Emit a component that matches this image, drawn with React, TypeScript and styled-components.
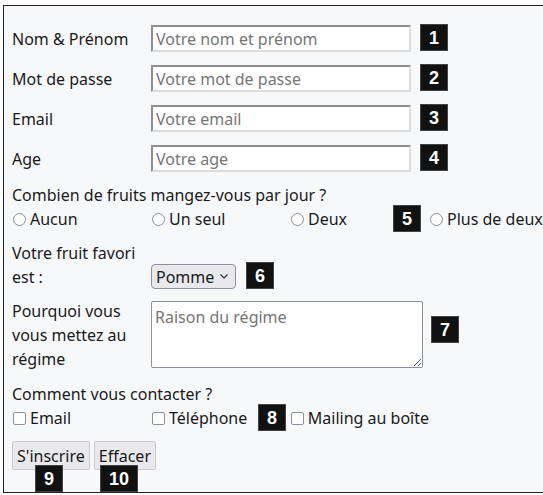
import React from "react";
import styled, { createGlobalStyle } from "styled-components";

const Global = createGlobalStyle`
  html, body { margin: 0; padding: 0; background: #ffffff; }
  body { font-family: "Noto Sans", "DejaVu Sans", sans-serif; font-size: 16px; color: #1a1a1a; overflow: hidden; }
`;

const Form = styled.form`
  position: relative;
  box-sizing: border-box;
  margin: 5px 0 0 3px;
  width: calc(100vw - 3px);
  height: 488px;
  border: 1px solid #222;
  border-right: 0;
  background: #f7f8fa;
  padding: 19px 0 0 8px;
  line-height: 24px;
`;

const Row = styled.div<{ $mt?: number; $align?: string }>`
  display: flex;
  align-items: ${(p) => p.$align || "center"};
  margin-top: ${(p) => p.$mt ?? 0}px;
`;

const Label = styled.label`
  width: 139px;
  flex: none;
`;

const TextInput = styled.input`
  box-sizing: border-box;
  width: 260px;
  height: 27px;
  margin: 0;
  padding: 1px 3px;
  font: inherit;
  background: #fff;
  border-width: 2px;
  border-style: solid;
  border-color: #8f8f8f #dcdcdc #dcdcdc #8f8f8f;
  &::placeholder { color: #767676; }
`;

const Badge = styled.span<{ $ml?: number; $mt?: number }>`
  display: inline-flex;
  align-items: center;
  justify-content: center;
  box-sizing: border-box;
  min-width: 28px;
  height: 27px;
  padding: 0 8px;
  margin-left: ${(p) => p.$ml ?? 0}px;
  margin-top: ${(p) => p.$mt ?? 0}px;
  background: #111;
  color: #fff;
  font-family: "Liberation Sans", Arial, sans-serif;
  font-weight: bold;
  font-size: 18px;
  line-height: 1;
  border: 1px solid #444;
  flex: none;
`;

const FloatBadge = styled(Badge)<{ $x: number; $y: number }>`
  position: absolute;
  left: ${(p) => p.$x}px;
  top: ${(p) => p.$y}px;
  margin: 0;
`;

const Question = styled.div<{ $mt: number }>`
  margin-top: ${(p) => p.$mt}px;
`;

const Options = styled.div`
  display: flex;
`;

const Option = styled.label`
  display: flex;
  align-items: center;
  width: 139px;
  flex: none;
  white-space: nowrap;
`;

const Radio = styled.input`
  appearance: none;
  box-sizing: border-box;
  width: 13px;
  height: 13px;
  margin: 1px 4px 0 1px;
  border: 1px solid #8f8f9d;
  border-radius: 50%;
  background: #fff;
`;

const Check = styled.input`
  appearance: none;
  box-sizing: border-box;
  width: 13px;
  height: 13px;
  margin: 1px 4px 0 1px;
  border: 1.5px solid #8f8f9d;
  border-radius: 2px;
  background: #fff;
`;

const SelectWrap = styled.div`
  position: relative;
  display: flex;
  margin-bottom: 0;
`;

const Select = styled.select`
  appearance: none;
  box-sizing: border-box;
  font: inherit;
  color: #1a1a1a;
  height: 25px;
  width: 85px;
  padding: 0 20px 0 4px;
  border: 1px solid #8f8f9d;
  border-radius: 4px;
  background: #e9e9ed;
`;

const Chevron = styled.svg`
  position: absolute;
  right: 8px;
  top: 10px;
  pointer-events: none;
`;

const TextArea = styled.textarea`
  box-sizing: border-box;
  width: 272px;
  height: 67px;
  margin: 2px 0 0;
  padding: 3px 3px;
  font: inherit;
  line-height: 24px;
  border: 1px solid #8f8f9d;
  border-radius: 2px;
  background: #fff;
  &::placeholder { color: #767676; }
`;

const Buttons = styled.div`
  display: flex;
  gap: 4px;
  margin-top: 11px;
`;

const Button = styled.button`
  font: inherit;
  color: #1a1a1a;
  height: 29px;
  padding: 0 4px;
  margin: 0;
  background: #e9e9ed;
  border: 1px solid #c9c9cf;
  border-radius: 2px;
`;

export default function App() {
  const fields = [
    ["Nom & Prénom", "text", "Votre nom et prénom"],
    ["Mot de passe", "password", "Votre mot de passe"],
    ["Email", "email", "Votre email"],
    ["Age", "text", "Votre age"],
  ];
  return (
    <>
      <Global />
      <Form>
        {fields.map(([label, type, ph], i) => (
          <Row key={label} $mt={i === 0 ? 0 : 13}>
            <Label>{label}</Label>
            <TextInput type={type} placeholder={ph} />
            <Badge $ml={9} $mt={-2}>{i + 1}</Badge>
          </Row>
        ))}
        <Question $mt={11}>Combien de fruits mangez-vous par jour ?</Question>
        <Options>
          {["Aucun", "Un seul", "Deux", "Plus de deux"].map((o) => (
            <Option key={o}>
              <Radio type="radio" name="fruits" />
              {o}
            </Option>
          ))}
        </Options>
        <Row $mt={10} $align="flex-end">
          <Label>Votre fruit favori est :</Label>
          <SelectWrap>
            <Select defaultValue="Pomme">
              <option>Pomme</option>
              <option>Banane</option>
              <option>Orange</option>
            </Select>
            <Chevron width="8" height="5" viewBox="0 0 8 5">
              <path d="M0.5 0.5 L4 4 L7.5 0.5" fill="none" stroke="#333" strokeWidth="1.2" />
            </Chevron>
          </SelectWrap>
          <Badge $ml={10}>6</Badge>
        </Row>
        <Row $mt={10} $align="flex-start">
          <Label>Pourquoi vous vous mettez au régime</Label>
          <TextArea placeholder="Raison du régime" />
          <Badge $ml={8} $mt={17}>7</Badge>
        </Row>
        <Question $mt={11}>Comment vous contacter ?</Question>
        <Options>
          {["Email", "Téléphone", "Mailing au boîte"].map((o) => (
            <Option key={o}>
              <Check type="checkbox" />
              {o}
            </Option>
          ))}
        </Options>
        <Buttons>
          <Button type="submit">S'inscrire</Button>
          <Button type="reset">Effacer</Button>
        </Buttons>
        <FloatBadge $x={389} $y={199}>5</FloatBadge>
        <FloatBadge $x={254} $y={398}>8</FloatBadge>
        <FloatBadge $x={31} $y={459}>9</FloatBadge>
        <FloatBadge $x={96} $y={459}>10</FloatBadge>
      </Form>
    </>
  );
}
